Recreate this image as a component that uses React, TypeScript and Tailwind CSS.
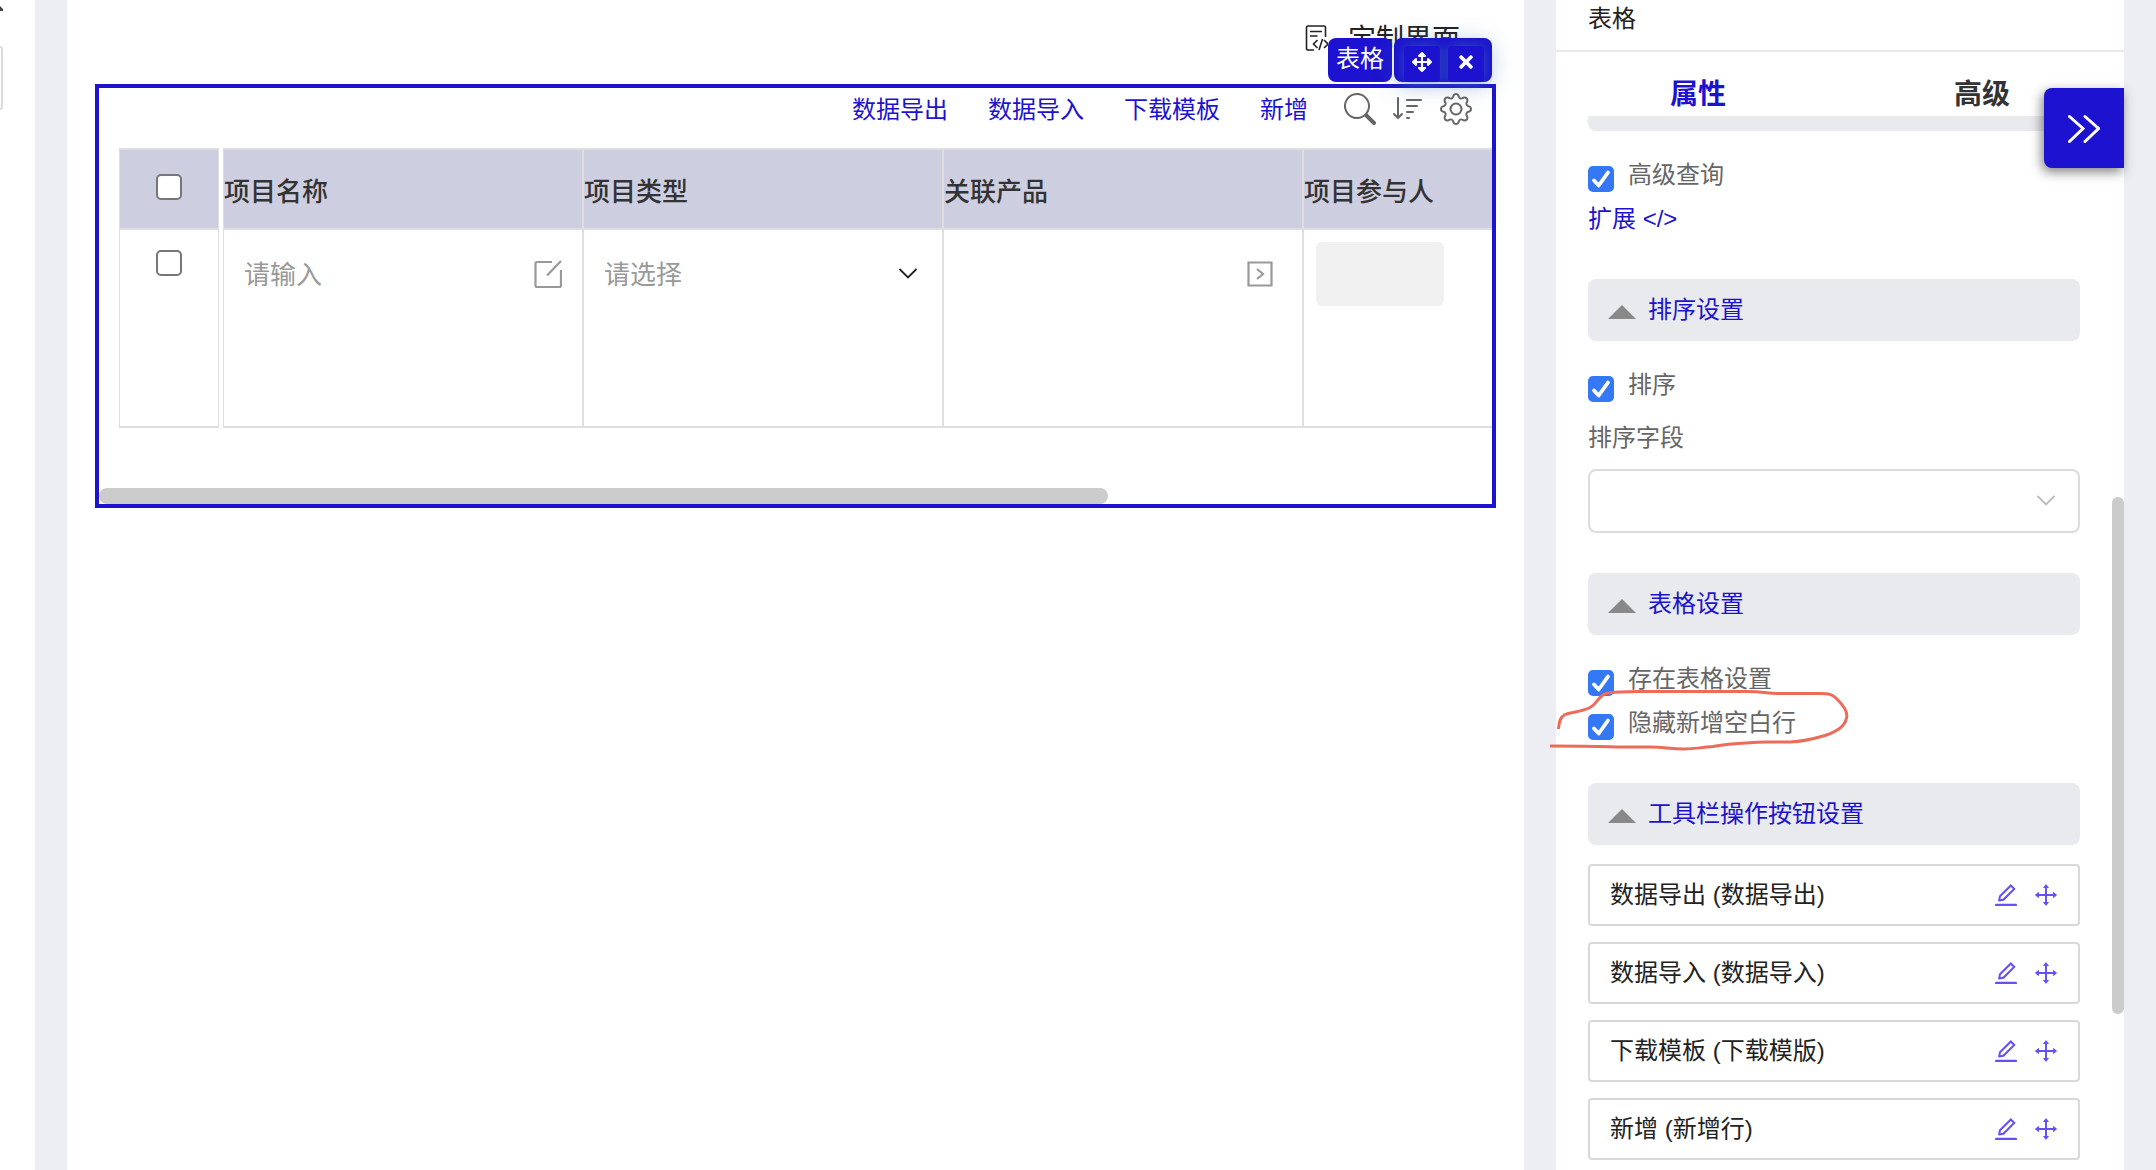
import React from 'react';
import { BsGear, BsSearch, BsSortDown } from 'react-icons/bs';
import { FaArrowsAlt, FaTimes } from 'react-icons/fa';
import { AiOutlineDrag, AiOutlineEdit } from 'react-icons/ai';

const toolbarActions = ['数据导出', '数据导入', '下载模板', '新增'];

const columns = ['项目名称', '项目类型', '关联产品', '项目参与人'];

const toolbarButtons = [
  '数据导出 (数据导出)',
  '数据导入 (数据导入)',
  '下载模板 (下载模版)',
  '新增 (新增行)',
];

const ChevronDown: React.FC<{ className?: string }> = ({ className }) => (
  <svg viewBox="0 0 28 28" fill="none" stroke="currentColor" strokeWidth="1.8" className={className}>
    <path d="M5.5 9 14 17.500 22.500 9" />
  </svg>
);

const CodePageIcon: React.FC = () => (
  <svg viewBox="0 0 24 26" fill="none" stroke="currentColor" strokeWidth="1.6" className="h-[26px] w-6">
    <path d="M10 25H4a1.500 1.500 0 0 1-1.500-1.500v-21A1.500 1.500 0 0 1 4 1h16a1.500 1.500 0 0 1 1.500 1.500V12M6 6.500h12M6 11h7.500" />
    <path d="m13.500 15-4 4 4 4M20 15l4 4-4 4M18.500 14l-3.500 11" />
  </svg>
);

const OpenEditIcon: React.FC = () => (
  <svg viewBox="0 0 28 28" fill="none" stroke="currentColor" strokeWidth="2.2" className="h-7 w-7">
    <path d="M18 2H3a1.500 1.500 0 0 0-1.500 1.500v22A1.500 1.500 0 0 0 3 27h22.500a1.500 1.500 0 0 0 1.500-1.500V10M27 1 13 15.500" />
  </svg>
);

const PickerIcon: React.FC = () => (
  <svg viewBox="0 0 28 28" fill="none" stroke="currentColor" strokeWidth="2.2" className="h-7 w-7">
    <path d="M2.500 2.500h23v23h-23zM11 9l6 5-6 5" />
  </svg>
);

const RowCheckbox: React.FC<{ label: string }> = ({ label }) => (
  <input
    type="checkbox"
    aria-label={label}
    className="block h-[26px] w-[26px] appearance-none rounded-[5px] border-2 border-[#767676] bg-white"
  />
);

const CheckboxField: React.FC<{ label: string }> = ({ label }) => (
  <label className="flex h-11 items-center gap-3.5 text-[#666666]">
    <span className="mt-2 grid">
      <input
        type="checkbox"
        defaultChecked
        className="peer col-start-1 row-start-1 h-[26px] w-[26px] appearance-none rounded-[5px] border-2 border-[#767676] checked:border-[#3478f6] checked:bg-[#3478f6]"
      />
      <svg
        viewBox="0 0 26 26"
        fill="none"
        stroke="white"
        strokeWidth="3.8"
        strokeLinecap="round"
        strokeLinejoin="round"
        className="pointer-events-none invisible col-start-1 row-start-1 h-[26px] w-[26px] peer-checked:visible"
      >
        <path d="m6 14.500 4.700 5L20 6.500" />
      </svg>
    </span>
    {label}
  </label>
);

const SectionHeader: React.FC<{ title: string }> = ({ title }) => (
  <button className="flex h-[62px] w-full items-center gap-3 rounded-lg bg-[#e9eaee] px-5 text-[#1c12cf]">
    <svg viewBox="0 0 28 14" fill="#888888" className="mt-1 h-3.5 w-7">
      <path d="M14 0 28 14H0z" />
    </svg>
    {title}
  </button>
);

const DataTable: React.FC = () => (
  <div className="flex gap-1 overflow-hidden pl-5 text-[26px]">
    <table className="w-[100px] shrink-0 table-fixed border-separate border-spacing-0 border-x border-[#dedede]">
      <thead>
        <tr>
          <th className="h-[82px] border-y-2 border-[#dedede] bg-[#cdcfe0]">
            <div className="-mt-1 flex justify-center">
              <RowCheckbox label="全选" />
            </div>
          </th>
        </tr>
      </thead>
      <tbody>
        <tr>
          <td className="h-[198px] border-b-2 border-[#dedede] pt-5 align-top">
            <div className="flex justify-center">
              <RowCheckbox label="选择行" />
            </div>
          </td>
        </tr>
      </tbody>
    </table>

    <table className="w-[1441px] shrink-0 table-fixed border-separate border-spacing-0 border-l border-[#dedede]">
      <thead>
        <tr>
          {columns.map((column) => (
            <th
              key={column}
              className="h-[82px] border-y-2 border-r-2 border-[#dedede] bg-[#cecee1] pt-1.5 text-left font-medium text-[#333333]"
            >
              {column}
            </th>
          ))}
        </tr>
      </thead>
      <tbody>
        <tr className="align-top text-[#999999]">
          <td className="h-[198px] border-r-2 border-b-2 border-[#dedede] pt-3">
            <div className="flex h-16 items-center px-5">
              <input
                aria-label="项目名称"
                placeholder="请输入"
                className="min-w-0 flex-1 pt-0.5 placeholder:text-[#999999]"
              />
              <button aria-label="编辑">
                <OpenEditIcon />
              </button>
            </div>
          </td>
          <td className="border-r-2 border-b-2 border-[#dedede] pt-3">
            <div className="grid h-16 items-center">
              <select aria-label="项目类型" className="col-start-1 row-start-1 h-16 w-full appearance-none px-5 pt-0.5">
                <option>请选择</option>
              </select>
              <ChevronDown className="pointer-events-none col-start-1 row-start-1 mr-5 h-7 w-7 justify-self-end text-[#222222]" />
            </div>
          </td>
          <td className="border-r-2 border-b-2 border-[#dedede] pt-3">
            <div className="flex h-16 items-center justify-end px-7">
              <button aria-label="选择关联产品">
                <PickerIcon />
              </button>
            </div>
          </td>
          <td className="border-r-2 border-b-2 border-[#dedede] px-3 pt-3">
            <div className="h-16 w-32 rounded-md bg-[#f1f1f1]" />
          </td>
        </tr>
      </tbody>
    </table>
  </div>
);

const Canvas: React.FC = () => (
  <main className="min-w-0 flex-1 bg-white px-7">
    <div className="mb-2 flex h-[76px] items-center justify-end gap-5 pr-9 text-[28px] text-[#222222]">
      <CodePageIcon />
      <span className="pt-1">定制界面</span>
    </div>

    <section className="relative border-4 border-[#1c12cf]">
      <div className="absolute -top-[50px] right-0 flex gap-0.5 text-white">
        <span className="flex h-11 w-16 items-center justify-center rounded-lg bg-[#1c12cf] pb-0.5">表格</span>
        <div className="flex h-11 items-end gap-2 rounded-lg bg-[#1c12cf] px-2 pl-2.5 shadow-[0_4px_24px_rgba(60,120,190,0.3)]">
          <button
            aria-label="移动"
            className="flex h-9 w-9 items-center justify-center rounded-sm bg-[#1c12cf] pb-1 shadow-[0_0_12px_rgba(60,130,170,0.6)]"
          >
            <FaArrowsAlt className="h-5 w-5" />
          </button>
          <button
            aria-label="删除"
            className="flex h-9 w-9 items-center justify-center rounded-sm bg-[#1c12cf] pb-1 shadow-[0_0_12px_rgba(60,130,170,0.6)]"
          >
            <FaTimes className="h-5 w-5" />
          </button>
        </div>
      </div>

      <div className="mb-[18px] flex h-[42px] items-center justify-end pr-5">
        <div className="mr-9 flex gap-10 pt-0.5 text-[#1c12cf]">
          {toolbarActions.map((action) => (
            <button key={action}>{action}</button>
          ))}
        </div>
        <div className="flex items-center gap-4 text-[#666666]">
          <button aria-label="搜索">
            <BsSearch className="h-8 w-8" />
          </button>
          <button aria-label="排序">
            <BsSortDown className="h-8 w-8" />
          </button>
          <button aria-label="设置">
            <BsGear className="h-8 w-8" />
          </button>
        </div>
      </div>

      <DataTable />

      <div className="mt-[60px] h-4">
        <div className="h-4 w-[72.4%] rounded-lg bg-[#cccccc]" />
      </div>
    </section>
  </main>
);

const PropertyPanel: React.FC = () => (
  <aside className="relative w-[568px] shrink-0 bg-white">
    <h2 className="h-[52px] border-b-2 border-[#e9eaee] px-8 leading-[38px] text-[#222222]">表格</h2>

    <div className="grid h-16 grid-cols-2 pt-[22px] text-[28px] leading-[42px] font-bold">
      <button className="text-[#1c12cf]">属性</button>
      <button className="text-[#333333]">高级</button>
    </div>

    <div className="pr-11 pl-8">
      <div className="h-[15px] rounded-b-lg bg-[#e9eaee]" />

      <div className="mt-[22px] mb-[38px]">
        <CheckboxField label="高级查询" />
        <a href="#extend" className="block leading-[44px] text-[#1c12cf]">
          扩展 &lt;/&gt;
        </a>
      </div>

      <SectionHeader title="排序设置" />
      <div className="mt-[22px] mb-10">
        <CheckboxField label="排序" />
        <label htmlFor="sort-field" className="mt-[9px] mb-[9px] block leading-[44px] text-[#666666]">
          排序字段
        </label>
        <div className="grid items-center">
          <select
            id="sort-field"
            className="col-start-1 row-start-1 h-16 w-full appearance-none rounded-lg border-2 border-[#dcdcdc] px-5"
          />
          <ChevronDown className="pointer-events-none col-start-1 row-start-1 mr-5 h-7 w-7 justify-self-end text-[#bbbbbb]" />
        </div>
      </div>

      <SectionHeader title="表格设置" />
      <div className="relative mt-[22px] mb-[38px]">
        <CheckboxField label="存在表格设置" />
        <CheckboxField label="隐藏新增空白行" />
        {/* hand-drawn mark around the last option */}
        <svg
          viewBox="0 0 310 70"
          fill="none"
          stroke="#ee6b58"
          strokeWidth="3"
          strokeLinejoin="round"
          className="pointer-events-none absolute top-[27px] -left-10 h-[70px] w-[310px]"
        >
          <path d="M10.500 45C11 38 12 33 17 30.500 22 28 34 28 42 23.500 50 19 50 12 58 9.500 67 7 78 8 92 7.500H200C212 7.500 220 9.500 232 9.500H272C281 9.500 284 10 289 15 296 22 300 29 298.500 34 297 42 288 48 277 51.500 265 55 255 57.500 242 58H218C187 59 178 60 165 62.500 151 63.500 148 65 136 65 122 65 116 63 103 63H67C50 62 30 62 2 62" />
        </svg>
      </div>

      <SectionHeader title="工具栏操作按钮设置" />
      <ul className="mt-[19px] space-y-4">
        {toolbarButtons.map((name) => (
          <li
            key={name}
            className="flex h-[62px] items-center rounded-sm border-2 border-[#d9d9d9] pr-[18px] pl-5 text-[#222222]"
          >
            <span className="flex-1">{name}</span>
            <span className="flex gap-3 text-[#6550f5]">
              <button aria-label="编辑">
                <AiOutlineEdit className="h-7 w-7" />
              </button>
              <button aria-label="拖动">
                <AiOutlineDrag className="h-7 w-7" />
              </button>
            </span>
          </li>
        ))}
      </ul>
    </div>

    <button
      aria-label="收起面板"
      className="absolute top-[88px] right-0 flex h-20 w-20 items-center justify-center rounded-l-lg bg-[#1c12cf] text-white shadow-[-2px_4px_12px_rgba(0,0,0,0.5)]"
    >
      <svg
        viewBox="0 0 32 32"
        fill="none"
        stroke="currentColor"
        strokeWidth="3"
        strokeLinecap="round"
        className="h-8 w-8"
      >
        <path d="M1.500 4.500 15 16.500 1.500 29.500M17 4.500 30.500 16.500 17 29.500" />
      </svg>
    </button>
    <div className="absolute top-[497px] right-0 h-[517px] w-3 rounded-full bg-[#cbcbcb]" />
  </aside>
);

const App: React.FC = () => {
  return (
    <div className="flex h-screen gap-8 overflow-hidden bg-[#edeef3] pr-8 font-['Liberation_Sans','Noto_Sans_CJK_SC',sans-serif] text-2xl">
      <div className="w-[35px] shrink-0 bg-white">
        <svg viewBox="0 0 35 14" fill="#444444" className="mb-8 h-3.5 w-full">
          <path d="M0 6 3 9v2H0z" />
        </svg>
        <div className="h-16 w-[3px] rounded-r-md border-2 border-l-0 border-[#dcdcdc]" />
      </div>
      <Canvas />
      <PropertyPanel />
    </div>
  );
};

export default App;
